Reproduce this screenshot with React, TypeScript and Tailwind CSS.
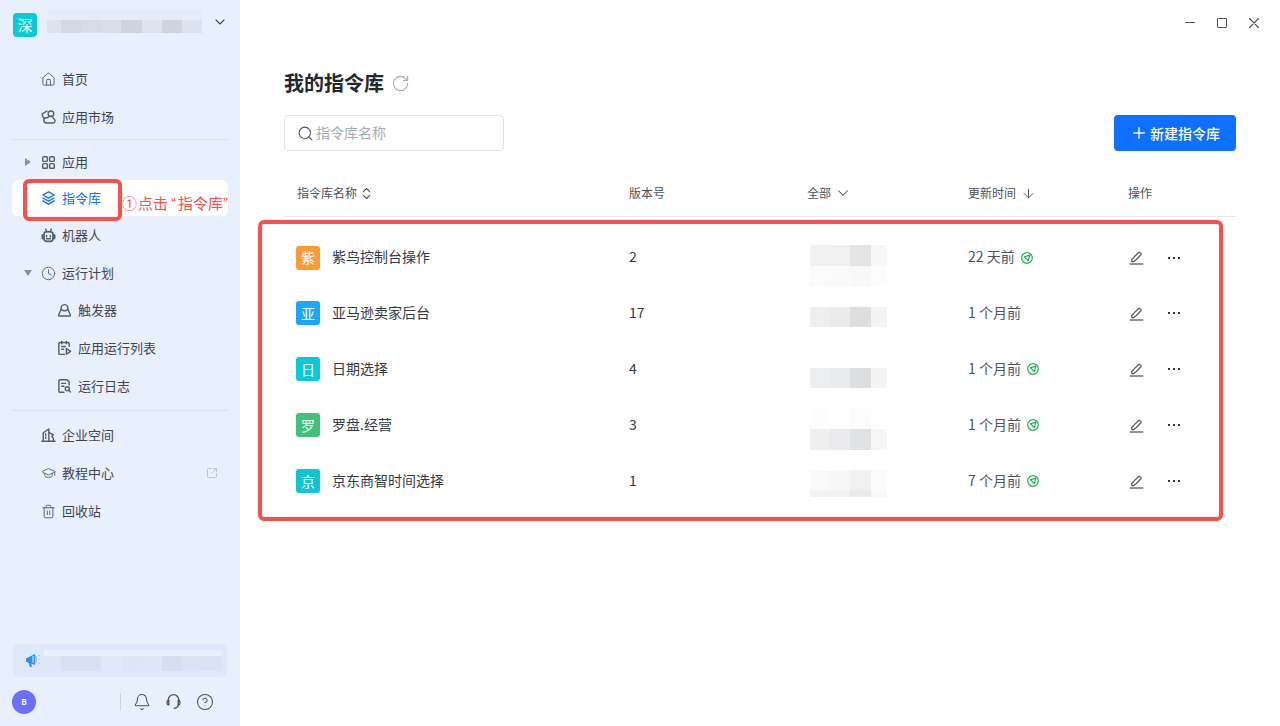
import {
  ArrowDown,
  Bell,
  ChevronDown,
  ChevronsUpDown,
  CircleHelp,
  Clock,
  GraduationCap,
  House,
  Plus,
  RotateCw,
  Search,
  SquareArrowOutUpRight,
  Trash2,
} from "lucide-react"
import type { ReactNode } from "react"

const font = "font-['Noto_Sans_CJK_SC',sans-serif]"

type MosaicRow = { h: number; colors: string[] }

// blurred-out regions of the screenshot
function Mosaic({ cols, rows, className }: { cols: number[]; rows: MosaicRow[]; className?: string }) {
  const width = cols.reduce((a, b) => a + b, 0)
  const height = rows.reduce((a, r) => a + r.h, 0)
  let y = 0
  return (
    <svg width={width} height={height} className={className} shapeRendering="crispEdges">
      {rows.map((r, i) => {
        let x = 0
        const top = y
        y += r.h
        return r.colors.map((c, j) => {
          const left = x
          x += cols[j]
          return <rect key={`${i}-${j}`} x={left} y={top} width={cols[j]} height={r.h} fill={c} />
        })
      })}
    </svg>
  )
}

function Svg({ children, size = 15 }: { children: ReactNode; size?: number }) {
  return (
    <svg
      width={size}
      height={size}
      viewBox="0 0 16 16"
      fill="none"
      stroke="currentColor"
      strokeWidth="1.5"
      strokeLinecap="round"
      strokeLinejoin="round"
    >
      {children}
    </svg>
  )
}

const MarketIcon = () => (
  <Svg size={16}>
    <path d="M6.4 1.6 1.2 4.6l1.4 4.6h2" />
    <circle cx="10.6" cy="4.6" r="3" />
    <path d="M5 14.4h7.8a2.4 2.4 0 0 0 .5-4.7 3.2 3.2 0 0 0-6-.9A3 3 0 0 0 5 14.4Z" />
  </Svg>
)

const GridIcon = () => (
  <Svg>
    <rect x="1.8" y="1.8" width="5" height="5" rx="1" />
    <rect x="9.2" y="1.8" width="5" height="5" rx="1" />
    <rect x="1.8" y="9.2" width="5" height="5" rx="1" />
    <rect x="9.2" y="9.2" width="5" height="5" rx="1" />
  </Svg>
)

const LayersIcon = () => (
  <Svg size={16}>
    <path d="M8 1.4 14 4.8 8 8.2 2 4.8 8 1.4Z" />
    <path d="M2 8 8 11.4 14 8" />
    <path d="M2 11 8 14.6 14 11" />
  </Svg>
)

const BotIcon = () => (
  <Svg size={17}>
    <path d="M5 1.2 6.2 4M11 1.2 9.8 4" />
    <rect x="3.2" y="4" width="9.6" height="10.2" rx="2.8" strokeWidth="1.8" />
    <path d="M2.8 7.4H1.4v3.8h1.4M13.2 7.4h1.4v3.8h-1.4" strokeWidth="1.7" />
    <path d="M6 8v1.4M10 8v1.4M6 11.5h4" />
  </Svg>
)

const TriggerIcon = () => (
  <Svg size={16}>
    <path d="M4.5 7.2a3.7 3.7 0 1 1 7 0" />
    <path d="M4.5 7.2 1.7 13.4a.7.7 0 0 0 .6 1h11.4a.7.7 0 0 0 .6-1l-2.8-6.2" />
    <path d="M4.6 7.4c1.9 1.6 4.9 1.6 6.8 0" />
  </Svg>
)

const RunListIcon = () => (
  <Svg size={16}>
    <path d="M13 6V3.2a1 1 0 0 0-1-1H3a1 1 0 0 0-1 1v10.6a1 1 0 0 0 1 1h5" />
    <path d="M5 1v2.4M10 1v2.4M5 6.4h4M5 9.4h2" />
    <path d="m10 8.6 4.6 3-4.6 3v-6Z" />
  </Svg>
)

const LogIcon = () => (
  <Svg size={16}>
    <path d="M13 7V3.6L10.6 1.4H3a1 1 0 0 0-1 1v11.2a1 1 0 0 0 1 1h4.4" />
    <path d="M5 5.2h4M5 8.2h2.4" />
    <circle cx="11" cy="11" r="2.2" />
    <path d="m12.8 12.8 1.6 1.6" />
  </Svg>
)

const CompanyIcon = () => (
  <Svg size={16}>
    <path d="M1 14.6h14" />
    <path d="M2.4 14.4V5.6L8.4 1.6v12.8" />
    <path d="M8.6 5.4 13 7.6l-1.4 2 1.6 2v2.8" />
    <path d="M5 6.6v1.6M5 10v1.6" />
  </Svg>
)

const HeadsetIcon = () => (
  <svg width="17" height="17" viewBox="0 0 16 16" fill="none" stroke="currentColor" strokeWidth="1.2" strokeLinecap="round" strokeLinejoin="round">
    <path d="M3 8V6.6a5 5 0 0 1 10 0V8" />
    <path d="M3.6 6.8C2.4 7 1.8 8 1.8 9s.6 2 1.8 2.2V6.8Z" />
    <path d="M12.4 6.8c1.2.2 1.8 1.2 1.8 2.2s-.6 2-1.8 2.2V6.8Z" />
    <path d="M12.4 11.2c-.2 2-1.6 3-3.8 3.2" />
  </svg>
)

const SentIcon = () => (
  <svg width="12" height="12" viewBox="0 0 12 12" fill="none" stroke="#1eb04f" strokeWidth="1.2" strokeLinejoin="round">
    <circle cx="6" cy="6" r="5.3" />
    <path d="M3.2 4.8 8.8 3.2 7.2 8.8 5.4 6.6 3.2 4.8Z" />
  </svg>
)

const EditIcon = () => (
  <svg width="15" height="15" viewBox="0 0 15 15" fill="none" stroke="#4f5763" strokeWidth="1.3" strokeLinejoin="round" strokeLinecap="round">
    <path d="M2.8 9.4 9.4 2.6a1 1 0 0 1 1.4 0l1 1a1 1 0 0 1 0 1.4L5 11.6H2.8V9.4Z" />
    <path d="M1.2 14h12.6" strokeWidth="1.5" stroke="#6b7280" />
  </svg>
)

const DotsIcon = () => (
  <svg width="12" height="4" viewBox="0 0 12 4" fill="#2f3640" shapeRendering="crispEdges">
    <rect x="0" y="1" width="2" height="2" />
    <rect x="5" y="1" width="2" height="2" />
    <rect x="10" y="1" width="2" height="2" />
  </svg>
)

const CloseIcon = () => (
  <svg width="10" height="10" viewBox="0 0 10 10" stroke="#4c5461" strokeWidth="1.1" strokeLinecap="round">
    <path d="M.5.5l9 9M9.5.5l-9 9" />
  </svg>
)

const MegaphoneIcon = () => (
  <svg width="18" height="15" viewBox="0 0 18 15" fill="none">
    <path d="M1 5.4 10 1v11L1 8.8Z" fill="#2f8df6" />
    <path d="M3.4 9 5 14h2L6 9.6Z" fill="#2f8df6" />
    <path d="M8 3v7" stroke="#bcd9fb" strokeWidth="1.2" />
    <path d="M10 3c1.6.8 1.6 6.4 0 7" stroke="#7db4f5" strokeWidth="1.4" />
    <path d="M13.6 2.4h1M14.4 6.4h2M13.6 10.4h1" stroke="#7db4f5" strokeWidth="1" strokeDasharray="1 1" />
  </svg>
)

type NavItem = {
  label: string
  icon: ReactNode
  arrow?: "right" | "down"
  child?: boolean
  active?: boolean
  mt: string
  external?: boolean
}

const navTop: NavItem[] = [
  { label: "首页", icon: <House size={17} strokeWidth={1.5} />, mt: "mt-0" },
  { label: "应用市场", icon: <MarketIcon />, mt: "mt-[2px]" },
]

const navMiddle: NavItem[] = [
  { label: "应用", icon: <GridIcon />, arrow: "right", mt: "mt-0" },
  { label: "指令库", icon: <LayersIcon />, active: true, mt: "mt-0" },
  { label: "机器人", icon: <BotIcon />, mt: "mt-[1px]" },
  { label: "运行计划", icon: <Clock size={17} strokeWidth={1.4} />, arrow: "down", mt: "mt-[2px]" },
  { label: "触发器", icon: <TriggerIcon />, child: true, mt: "mt-[1px]" },
  { label: "应用运行列表", icon: <RunListIcon />, child: true, mt: "mt-[2px]" },
  { label: "运行日志", icon: <LogIcon />, child: true, mt: "mt-[2px]" },
]

const navBottom: NavItem[] = [
  { label: "企业空间", icon: <CompanyIcon />, mt: "mt-0" },
  { label: "教程中心", icon: <GraduationCap size={18} strokeWidth={1.4} />, external: true, mt: "mt-[2px]" },
  { label: "回收站", icon: <Trash2 size={17} strokeWidth={1.5} />, mt: "mt-[2px]" },
]

function NavRow({ item }: { item: NavItem }) {
  return (
    <div
      className={`relative flex h-[36px] items-center gap-[6px] rounded-md text-[13px] ${item.mt} ${
        item.child ? "pl-[45px]" : "pl-[29px]"
      } ${item.active ? "bg-white text-[#0f6fff]" : "text-[#3e4654]"}`}
    >
      {item.arrow === "right" && (
        <span className="absolute left-[13px] h-0 w-0 border-y-[4px] border-l-[6px] border-y-transparent border-l-[#8a919c]" />
      )}
      {item.arrow === "down" && (
        <span className="absolute left-[12px] h-0 w-0 border-x-[4px] border-t-[6px] border-x-transparent border-t-[#8a919c]" />
      )}
      <span className={`flex w-[15px] justify-center ${item.active ? "text-[#0f6fff]" : "text-[#545c69]"}`}>
        {item.icon}
      </span>
      <span>{item.label}</span>
      {item.external && (
        <SquareArrowOutUpRight size={12} strokeWidth={1.6} className="absolute right-[10px] text-[#b4bac4]" />
      )}
    </div>
  )
}

function Sidebar() {
  return (
    <aside className="relative flex h-full w-[240px] shrink-0 flex-col bg-[#e9f0fd]">
      <div className="flex h-[61px] items-start pl-[13px] pr-[12px] pt-[13px]">
        <div className="flex h-[24px] w-[24px] items-center justify-center rounded-[4px] bg-[#09cbd8] text-[15px] text-white">
          深
        </div>
        <Mosaic
          className="ml-[10px] mt-[-3px]"
          cols={[14, 20, 20, 20, 21, 20, 20, 20]}
          rows={[
            { h: 10, colors: ["#e6edf9", "#e5ecf8", "#e5ecf8", "#e6edf9", "#e6edf9", "#e5ecf8", "#e5ecf8", "#e6edf9"] },
            { h: 13, colors: ["#dde3ee", "#d2d8e4", "#d6dbe6", "#d9dfea", "#cdd3df", "#dee4ef", "#cdd3df", "#dde3ee"] },
          ]}
        />
        <ChevronDown size={16} strokeWidth={1.6} className="ml-auto mt-[1px] text-[#3e4654]" />
      </div>

      <nav className="flex flex-1 flex-col px-[12px]">
        {navTop.map((item) => (
          <NavRow key={item.label} item={item} />
        ))}
        <div className="mb-[4px] mt-[4px] h-px bg-[#dde2ea]" />
        {navMiddle.map((item) => (
          <NavRow key={item.label} item={item} />
        ))}
        <div className="my-[6px] h-px bg-[#dde2ea]" />
        {navBottom.map((item) => (
          <NavRow key={item.label} item={item} />
        ))}
      </nav>

      <div className="mx-[13px] flex h-[33px] items-center rounded-md bg-[#dde9fb] pl-[12px] pr-[5px]">
        <MegaphoneIcon />
        <Mosaic
          className="ml-auto"
          cols={[17, 40, 21, 20, 20, 20, 20, 20]}
          rows={[
            { h: 6, colors: ["#e8f0fc", "#e8f0fc", "#e8f0fc", "#e8f0fc", "#e8f0fc", "#e8f0fc", "#e8f0fc", "#e8f0fc"] },
            { h: 15, colors: ["#dde8f7", "#d6e2f3", "#dfe9f8", "#dbe6f6", "#dde8f7", "#d4e0f1", "#d9e4f4", "#d8e4f5"] },
          ]}
        />
      </div>

      <div className="flex h-[49px] items-center pl-[12px] text-[#484f5c]">
        <div className="flex h-[24px] w-[24px] items-center justify-center rounded-full bg-[#6c6ffb] text-[8px] font-bold text-white">
          B
        </div>
        <div className="ml-[84px] h-[18px] w-px bg-[#cfd4dc]" />
        <div className="ml-[12px] flex items-center gap-[14px]">
          <Bell size={18} strokeWidth={1.4} />
          <HeadsetIcon />
          <CircleHelp size={18} strokeWidth={1.35} />
        </div>
      </div>

      {/* 标注 */}
      <div className="absolute left-[23px] top-[179px] h-[42px] w-[99px] rounded-[6px] border-[4px] border-[#fb4f4d]" />
      <div className="absolute left-[122px] top-[192px] flex whitespace-nowrap text-[15px] leading-[22px] text-[#fb4f4d]">
        <span className="w-[16px]">①</span>
        点击
        <span className="ml-[3px] w-[7px] font-['Liberation_Sans',sans-serif]">“</span>
        指令库
        <span className="font-['Liberation_Sans',sans-serif]">”</span>
      </div>
    </aside>
  )
}

const rows = [
  {
    tile: "紫",
    tileBg: "bg-[#ff9a35]",
    name: "紫鸟控制台操作",
    version: "2",
    time: "22 天前",
    sent: true,
    mt: "mt-[16px]",
    mosaic: [
      { h: 21, colors: ["#f1f1f2", "#f0f0f1", "#e3e4e6", "#f7f7f8"] },
      { h: 20, colors: ["#fbfbfb", "#fafafa", "#f8f8f8", "#fcfcfc"] },
    ],
  },
  {
    tile: "亚",
    tileBg: "bg-[#1aa5ff]",
    name: "亚马逊卖家后台",
    version: "17",
    time: "1 个月前",
    sent: false,
    mt: "mt-[22px]",
    mosaic: [{ h: 20, colors: ["#edeef0", "#eaebed", "#dddee0", "#f4f4f5"] }],
  },
  {
    tile: "日",
    tileBg: "bg-[#09cbd8]",
    name: "日期选择",
    version: "4",
    time: "1 个月前",
    sent: true,
    mt: "mt-[27px]",
    mosaic: [{ h: 20, colors: ["#edeef0", "#eaebed", "#dddee0", "#f4f4f5"] }],
  },
  {
    tile: "罗",
    tileBg: "bg-[#41c27a]",
    name: "罗盘.经营",
    version: "3",
    time: "1 个月前",
    sent: true,
    mt: "mt-[12px]",
    mosaic: [
      { h: 20, colors: ["#fdfdfd", "#ffffff", "#fcfcfc", "#ffffff"] },
      { h: 21, colors: ["#efeff0", "#eaeaec", "#e1e2e4", "#f6f6f7"] },
    ],
  },
  {
    tile: "京",
    tileBg: "bg-[#0ec5d4]",
    name: "京东商智时间选择",
    version: "1",
    time: "7 个月前",
    sent: true,
    mt: "mt-[17px]",
    mosaic: [
      { h: 20, colors: ["#f9f9f9", "#f7f7f8", "#f1f1f2", "#fbfbfb"] },
      { h: 7, colors: ["#f3f3f4", "#f2f2f3", "#ebebec", "#f9f9f9"] },
    ],
  },
]

const gridCols = "grid grid-cols-[345px_178px_161px_160px_1fr]"

function Table() {
  return (
    <div className="mt-[24px]">
      <div className={`${gridCols} h-[42px] items-start border-b border-[#e5e7eb] pt-[9px] text-[12px] leading-[18px] text-[#4b5360]`}>
        <div className="flex items-center gap-[2px] pl-[13px]">
          指令库名称
          <ChevronsUpDown size={15} strokeWidth={1.7} />
        </div>
        <div>版本号</div>
        <div className="flex items-center gap-[3px]">
          全部
          <ChevronDown size={18} strokeWidth={1.4} />
        </div>
        <div className="flex items-center gap-[5px]">
          更新时间
          <ArrowDown size={15} strokeWidth={1.5} />
        </div>
        <div>操作</div>
      </div>
      <div className="mt-[12px]">
        {rows.map((r) => (
          <div key={r.name} className={`${gridCols} h-[56px] items-center text-[14px] text-[#333a45]`}>
            <div className="flex items-center gap-[12px] pl-[12px]">
              <span className={`flex h-[24px] w-[24px] items-center justify-center rounded-[3px] text-white ${r.tileBg}`}>
                {r.tile}
              </span>
              <span className="pb-[2px]">{r.name}</span>
            </div>
            <div className="pb-[2px]">{r.version}</div>
            <div className="h-full pl-[3px]">
              <Mosaic className={r.mt} cols={[20, 20, 21, 16]} rows={r.mosaic} />
            </div>
            <div className="flex items-center gap-[6px] text-[#4b5360]">
              <span className="pb-[2px]">{r.time}</span>
              {r.sent && <SentIcon />}
            </div>
            <div className="flex items-center gap-[24px] pl-[1px]">
              <EditIcon />
              <DotsIcon />
            </div>
          </div>
        ))}
      </div>
    </div>
  )
}

export default function App() {
  return (
    <div className={`flex h-[726px] w-[1280px] overflow-hidden bg-white ${font}`}>
      <Sidebar />
      <main className="relative flex-1">
        <div className="flex h-[46px] items-start justify-end gap-[22px] pr-[21px] pt-[18px]">
          <span className="mt-[4px] h-px w-[10px] bg-[#4c5461]" />
          <span className="h-[10px] w-[10px] rounded-[1px] border border-[#4c5461]" />
          <CloseIcon />
        </div>
        <div className="px-[44px]">
          <div className="mt-[23px] flex h-[28px] items-center gap-[7px]">
            <h1 className="text-[20px] font-bold text-[#23272e]">我的指令库</h1>
            <RotateCw size={19} strokeWidth={1.4} className="text-[#a4a9b1]" />
          </div>
          <div className="mt-[18px] flex items-center justify-between">
            <div className="flex h-[36px] w-[220px] items-center gap-[2px] rounded-[4px] border border-[#e2e4e8] pl-[12px] text-[14px] text-[#a5abb5]">
              <Search size={17} strokeWidth={1.5} className="text-[#4c5461]" />
              <span className="pb-[2px]">指令库名称</span>
            </div>
            <button className="flex h-[36px] w-[122px] items-center justify-center gap-[2px] rounded-[4px] bg-[#0f6fff] text-[14px] font-medium text-white">
              <Plus size={18} strokeWidth={1.8} />
              新建指令库
            </button>
          </div>
          <Table />
        </div>
        {/* 标注 */}
        <div className="absolute left-[18px] top-[220px] h-[301px] w-[965px] rounded-[6px] border-[4px] border-[#fb4f4d]" />
      </main>
    </div>
  )
}
